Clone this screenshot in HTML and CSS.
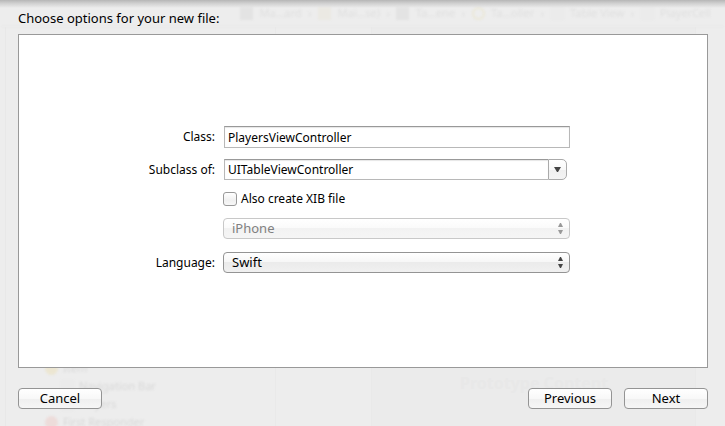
FILE: index.html
```html
<!DOCTYPE html>
<html lang="en">
<head>
<meta charset="utf-8">
<meta name="viewport" content="width=device-width, initial-scale=1">
<title>New File</title>
<link rel="stylesheet" href="styles.css">
</head>
<body>
<!-- editor window behind the sheet -->
<div class="editor" aria-hidden="true">
    <div class="jumpbar">
        <i class="icon dark"></i><span>Ma…ard</span><b>›</b>
        <i class="icon folder"></i><span>Mai…se)</span><b>›</b>
        <i class="icon dark"></i><span>Ta…ene</span><b>›</b>
        <i class="icon ring"></i><span>Ta…oller</span><b>›</b>
        <i class="icon box"></i><span>Table View</span><b>›</b>
        <i class="icon box"></i><span>PlayerCell</span>
    </div>
    <div class="panes">
        <div class="gutter"></div>
        <ul class="outline">
            <li><i class="icon yellow"></i>Item</li>
            <li class="child"><i class="icon box"></i>Navigation Bar</li>
            <li class="child"><i class="icon box"></i>Players</li>
            <li><i class="icon red"></i>First Responder</li>
        </ul>
        <div class="margin"></div>
        <div class="canvas">Prototype Content</div>
        <div class="edge"></div>
    </div>
</div>

<form class="sheet">
    <h1>Choose options for your new file:</h1>
    <div class="panel">
        <label class="name" for="class">Class:</label>
        <input class="text" type="text" id="class" value="PlayersViewController">

        <label class="name" for="subclass">Subclass of:</label>
        <div class="combo">
            <input class="text" type="text" id="subclass" value="UITableViewController">
            <button type="button" class="drop" aria-label="Show classes">
                <svg width="7" height="5" viewBox="0 0 7 5"><path d="M0 0h7L4 5H3z" fill="#444"/></svg>
            </button>
        </div>

        <div class="check">
            <input type="checkbox" id="xib">
            <label for="xib">Also create XIB file</label>
        </div>

        <div class="popup device">
            <select disabled aria-label="Device">
                <option>iPhone</option>
                <option>iPad</option>
            </select>
            <svg class="arrows" width="5" height="11" viewBox="0 0 5 11"><path d="M0 4L2 0h1L5 4zM0 7h5L3 11H2z"/></svg>
        </div>

        <label class="name" for="language">Language:</label>
        <div class="popup">
            <select id="language">
                <option>Swift</option>
                <option>Objective-C</option>
            </select>
            <svg class="arrows" width="5" height="11" viewBox="0 0 5 11"><path d="M0 4L2 0h1L5 4zM0 7h5L3 11H2z"/></svg>
        </div>
    </div>
    <div class="buttons">
        <button type="button" class="push cancel">Cancel</button>
        <button type="button" class="push">Previous</button>
        <button type="submit" class="push">Next</button>
    </div>
</form>
</body>
</html>
```

FILE: styles.css
```css
*{box-sizing:border-box;}
body,h1,ul,input,select,button{margin:0;padding:0;}
ul{list-style:none;}
body{position:relative;min-height:100vh;background:#ededed;color:#000;font:12px/20px "Lucida Grande","Noto Sans",sans-serif;}
input,select,button{font:inherit;color:inherit;}

/* editor window, showing faintly through the sheet */
.editor{position:absolute;inset:0;display:flex;flex-direction:column;overflow:hidden;color:#d8d8d8;font-size:11px;line-height:18px;}
.jumpbar{display:flex;align-items:center;justify-content:space-between;height:27px;padding:0 14px 0 240px;border-bottom:1px solid #e9e9e9;color:#dfdfdf;white-space:nowrap;filter:blur(1px);}
.jumpbar b{font-weight:400;}
.icon{flex:none;width:13px;height:13px;background:#e4e4e4;}
.folder{background:#ebe9e3;}
.dark{background:#e3e3e3;}
.ring{border:2px solid #ebe8d8;border-radius:50%;background:none;}
.box{border:1px solid #e8e8e8;background:#ebebeb;}
.yellow{border-radius:50%;background:#ece6d2;}
.red{border-radius:50%;background:#eddcda;}
.panes{flex:1;display:flex;}
.gutter{width:6px;border-right:1px solid #e8e8e8;}
.outline{display:flex;flex-direction:column;justify-content:flex-end;width:270px;margin-bottom:-5px;padding-left:39px;border-right:1px solid #e9e9e9;}
.outline li{display:flex;align-items:center;gap:5px;filter:blur(1px);}
.outline .child{padding-left:16px;}
.margin{width:96px;border-right:1px solid #e9e9e9;}
.canvas{flex:1;display:flex;align-items:flex-end;padding:0 0 34px 88px;background:#ebebeb;color:#e8e8e8;font-size:16px;font-weight:700;}
.edge{width:30px;background:#ededed;border-left:1px solid #e9e9e9;}

.sheet{position:relative;display:flex;flex-direction:column;min-height:100vh;padding:8px 17px 17px 18px;}
.sheet::before{content:"";position:absolute;top:0;left:0;right:0;height:8px;background:linear-gradient(#b6b6b6,#cfcfcf 40%,rgba(237,237,237,0));}
h1{position:relative;margin-bottom:6px;font-size:13px;line-height:20px;font-weight:400;}

.panel{flex:1;display:grid;grid-template-columns:196px minmax(0,1fr);grid-template-rows:21px 21px 14px 22px 21px;align-items:start;align-content:start;gap:12px 8px;padding:91px 137px 24px 0;border:1px solid #999;background:#fff;}
.name{text-align:right;line-height:21px;}

.text{display:block;width:100%;height:21px;padding:0 3px;border:1px solid #b8b8b8;border-top-color:#999;background:#fff;box-shadow:inset 0 1px 1px #e6e6e6;outline:0;}
.panel > .text{width:auto;height:22px;margin-left:1px;}
.combo{display:flex;margin:0 3px 0 1px;}
.combo .text{flex:1;min-width:0;border-right:0;}
.drop{display:flex;align-items:center;justify-content:center;width:19px;height:21px;border:1px solid #aaa;border-radius:0 5px 5px 0;background:linear-gradient(#fff,#f8f8f8 50%,#efefef 50%,#f4f4f4);}

.check{grid-column:2;display:flex;align-items:center;gap:4px;height:14px;}
.check input{appearance:none;width:14px;height:14px;border:1px solid #999;border-radius:3px;background:linear-gradient(#fff,#f0f0f0 60%,#f7f7f7);}
.check input:checked{background:#8fb8ea;}

.popup{position:relative;}
.popup select{appearance:none;display:block;width:100%;height:21px;padding:0 24px 0 8px;border:1px solid #949494;border-radius:4px;background:linear-gradient(#fff,#f6f6f6 50%,#ebebeb 50%,#f0f0f0);font-size:13px;line-height:19px;opacity:1;outline:0;}
.arrows{position:absolute;top:5px;right:7px;fill:#444;pointer-events:none;}
.device{grid-column:2;}
.device select{border-color:#c8c8c8;background:linear-gradient(#fff,#fafafa 50%,#f2f2f2 50%,#f5f5f5);color:#808080;}
.device .arrows{fill:#999;}

.buttons{display:flex;gap:12px;margin-top:20px;}
.push{width:84px;height:21px;border:1px solid #949494;border-radius:4px;background:linear-gradient(#fff,#f8f8f8 50%,#efefef 50%,#f6f6f6);font-size:13px;line-height:19px;}
.push:active,.drop:active{background:#dcdcdc;}
.cancel{margin-right:auto;}
```
